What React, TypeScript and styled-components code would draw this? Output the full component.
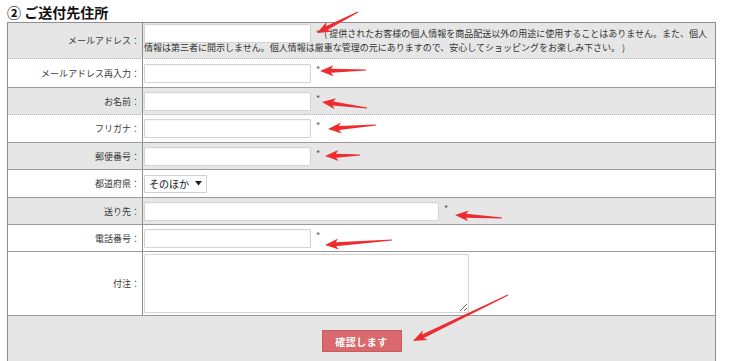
import React from 'react'
import styled, { createGlobalStyle } from 'styled-components'

const GlobalStyle = createGlobalStyle`
  html, body {
    margin: 0;
    padding: 0;
    background: #ffffff;
  }
  body {
    font-family: 'Noto Sans CJK JP', 'Noto Sans', sans-serif;
    color: #333333;
  }
`

interface RowProps {
  $shade?: boolean
  $h: number
  $dotted?: boolean
}

interface InputProps {
  $w: number
}

type Arrow = [number, number, number, number]

// annotation arrows: tail x, tail y, head x, head y
const arrows: Arrow[] = [
  [358, 12, 317, 33],
  [366, 70, 320, 71],
  [367, 108, 322, 102],
  [376, 125, 328, 129],
  [360, 155, 325, 156],
  [502, 218, 455, 215],
  [392, 240, 325, 245],
  [508, 295, 413, 341]
]

const arrowPoints = ([x1, y1, x2, y2]: Arrow): string => {
  const dx = x2 - x1
  const dy = y2 - y1
  const len = Math.hypot(dx, dy)
  const ux = dx / len
  const uy = dy / len
  const nx = -uy
  const ny = ux
  const headLen = 11
  const headW = 5.5
  const w0 = 0.5
  const w1 = 2
  const bx = x2 - ux * headLen
  const by = y2 - uy * headLen
  const wx = bx - ux * 2.5
  const wy = by - uy * 2.5
  const pts = [
    [x1 + nx * w0, y1 + ny * w0],
    [bx + nx * w1, by + ny * w1],
    [wx + nx * headW, wy + ny * headW],
    [x2, y2],
    [wx - nx * headW, wy - ny * headW],
    [bx - nx * w1, by - ny * w1],
    [x1 - nx * w0, y1 - ny * w0]
  ]
  return pts.map(p => `${p[0].toFixed(1)},${p[1].toFixed(1)}`).join(' ')
}

const App: React.FC = () => {
  return (
    <StyledPage>
      <GlobalStyle />
      <StyledHeading>② ご送付先住所</StyledHeading>
      <StyledTable>
        <StyledRow $shade $h={35} $dotted>
          <StyledLabel>メールアドレス：</StyledLabel>
          <StyledNoteCell>
            <StyledInlineInput $w={167} />
            <StyledNoteStar>*</StyledNoteStar>
            ( 提供されたお客様の個人情報を商品配送以外の用途に使用することはありません。また、個人情報は第三者に開示しません。個人情報は厳重な管理の元にありますので、安心してショッピングをお楽しみ下さい。 )
          </StyledNoteCell>
        </StyledRow>
        <StyledRow $h={28}>
          <StyledLabel>メールアドレス再入力：</StyledLabel>
          <StyledCell>
            <StyledInput $w={167} />
            <StyledStar>*</StyledStar>
          </StyledCell>
        </StyledRow>
        <StyledRow $shade $h={26} $dotted>
          <StyledLabel>お名前：</StyledLabel>
          <StyledCell>
            <StyledInput $w={167} />
            <StyledStar>*</StyledStar>
          </StyledCell>
        </StyledRow>
        <StyledRow $h={27}>
          <StyledLabel>フリガナ：</StyledLabel>
          <StyledCell>
            <StyledInput $w={167} />
            <StyledStar>*</StyledStar>
          </StyledCell>
        </StyledRow>
        <StyledRow $shade $h={26}>
          <StyledLabel>郵便番号：</StyledLabel>
          <StyledCell>
            <StyledInput $w={167} />
            <StyledStar>*</StyledStar>
          </StyledCell>
        </StyledRow>
        <StyledRow $h={27}>
          <StyledLabel>都道府県：</StyledLabel>
          <StyledCell>
            <StyledSelect>
              <span>そのほか</span>
              <svg width='7' height='5' viewBox='0 0 7 5'>
                <path d='M0 0 L7 0 L3.5 4.5 Z' fill='#222' />
              </svg>
            </StyledSelect>
          </StyledCell>
        </StyledRow>
        <StyledRow $shade $h={26}>
          <StyledLabel>送り先：</StyledLabel>
          <StyledCell>
            <StyledInput $w={295} />
            <StyledStar>*</StyledStar>
          </StyledCell>
        </StyledRow>
        <StyledRow $h={26}>
          <StyledLabel>電話番号：</StyledLabel>
          <StyledCell>
            <StyledInput $w={167} />
            <StyledStar>*</StyledStar>
          </StyledCell>
        </StyledRow>
        <StyledRow $h={63}>
          <StyledLabel>付注：</StyledLabel>
          <StyledCell>
            <StyledTextarea />
          </StyledCell>
        </StyledRow>
        <StyledSubmitRow>
          <StyledButton type='button'>確認します</StyledButton>
        </StyledSubmitRow>
      </StyledTable>
      <StyledOverlay width='750' height='361' viewBox='0 0 750 361'>
        {arrows.map((a, i) => (
          <polygon key={i} points={arrowPoints(a)} fill='#ee2b2e' />
        ))}
      </StyledOverlay>
    </StyledPage>
  )
}

const StyledPage = styled.div`
  position: relative;
  width: 750px;
  height: 361px;
  overflow: hidden;
  padding-left: 7px;
  box-sizing: border-box;
`

const StyledHeading = styled.h2`
  margin: 0;
  padding-top: 2px;
  height: 20px;
  font-size: 14px;
  line-height: 20px;
  font-weight: 700;
  color: #111111;
`

const StyledTable = styled.div`
  width: 709px;
  box-sizing: border-box;
  border: 1px solid #8c8c8c;
  border-bottom: 0;
  display: flex;
  flex-direction: column;
`

const StyledRow = styled.div<RowProps>`
  display: grid;
  grid-template-columns: 135px 1fr;
  height: ${props => props.$h}px;
  background-color: ${props => (props.$shade ? '#e6e6e6' : '#ffffff')};
  border-bottom: 1px ${props => (props.$dotted ? 'dotted #b5b5b5' : 'solid #9a9a9a')};
`

const StyledLabel = styled.div`
  display: flex;
  align-items: center;
  justify-content: flex-end;
  padding-right: 2px;
  border-right: 1px solid #8c8c8c;
  font-size: 9px;
  color: #3a3a3a;
  white-space: nowrap;
`

const StyledCell = styled.div`
  display: flex;
  align-items: center;
  padding-left: 1px;
`

const StyledNoteCell = styled.div`
  padding: 1px 7px 0 1px;
  font-size: 9px;
  line-height: 14px;
  color: #333333;
`

const StyledInput = styled.input<InputProps>`
  box-sizing: border-box;
  width: ${props => props.$w}px;
  height: 19px;
  margin: 0;
  padding: 0 3px;
  border: 1px solid #d4d4d4;
  border-radius: 1px;
  background: #ffffff;
  box-shadow: inset 0 1px 1px rgba(0, 0, 0, 0.04);
  outline: none;
  font-size: 10px;
`

const StyledInlineInput = styled(StyledInput)`
  vertical-align: baseline;
  margin-bottom: -2px;
`

const StyledStar = styled.span`
  margin-left: 5px;
  font-size: 9px;
  color: #555555;
  line-height: 1;
  align-self: flex-start;
  margin-top: 6px;
`

const StyledNoteStar = styled.span`
  margin: 0 4px 0 5px;
  color: #555555;
`

const StyledSelect = styled.div`
  box-sizing: border-box;
  display: inline-flex;
  align-items: center;
  gap: 6px;
  height: 18px;
  padding: 0 4px;
  border: 1px solid #d0d0d0;
  border-radius: 1px;
  background: #ffffff;
  font-size: 10px;
  color: #111111;
`

const StyledTextarea = styled.textarea`
  box-sizing: border-box;
  width: 325px;
  height: 59px;
  margin: 0;
  padding: 2px;
  border: 1px solid #d4d4d4;
  border-radius: 1px;
  background: #ffffff;
  font-size: 10px;
  outline: none;
`

const StyledSubmitRow = styled.div`
  height: 60px;
  background-color: #e6e6e6;
  display: flex;
  justify-content: center;
  align-items: flex-start;
  padding-top: 14px;
  box-sizing: border-box;
`

const StyledButton = styled.button`
  width: 80px;
  height: 22px;
  margin: 0;
  padding: 0;
  background-color: #d9696c;
  border: 1px solid #c95a5d;
  color: #ffffff;
  font-family: 'Noto Sans CJK JP', sans-serif;
  font-size: 10px;
  font-weight: 700;
  letter-spacing: 0.5px;
  cursor: pointer;
`

const StyledOverlay = styled.svg`
  position: absolute;
  left: 0;
  top: 0;
  pointer-events: none;
`

export default App
